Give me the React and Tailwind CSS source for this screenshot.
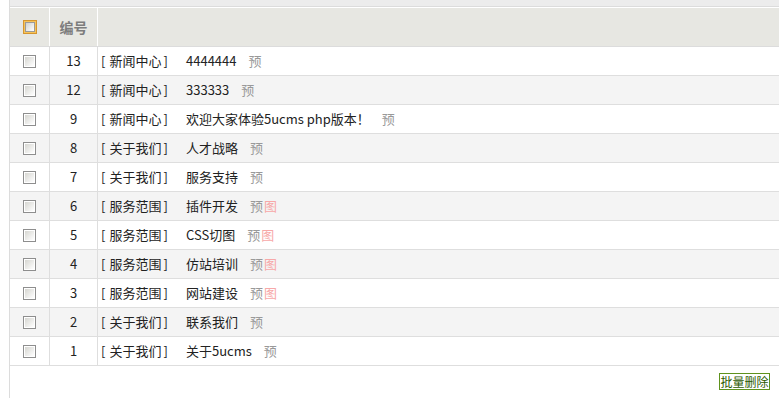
import React from "react";

const rows = [
  { id: 13, cat: "新闻中心", title: "4444444", pic: false },
  { id: 12, cat: "新闻中心", title: "333333", pic: false },
  { id: 9, cat: "新闻中心", title: "欢迎大家体验5ucms php版本！", pic: false },
  { id: 8, cat: "关于我们", title: "人才战略", pic: false },
  { id: 7, cat: "关于我们", title: "服务支持", pic: false },
  { id: 6, cat: "服务范围", title: "插件开发", pic: true },
  { id: 5, cat: "服务范围", title: "CSS切图", pic: true },
  { id: 4, cat: "服务范围", title: "仿站培训", pic: true },
  { id: 3, cat: "服务范围", title: "网站建设", pic: true },
  { id: 2, cat: "关于我们", title: "联系我们", pic: false },
  { id: 1, cat: "关于我们", title: "关于5ucms", pic: false },
];

const Checkbox = () => (
  <span className="block w-[13px] h-[13px] border border-[#8e8e8e] p-px bg-white">
    <span className="block w-full h-full bg-gradient-to-br from-[#d6d6d1] to-white" />
  </span>
);

const HeaderCheckbox = () => (
  <span className="block w-[14px] h-[14px] border border-[#d5962f] bg-[#f7c35a] p-px">
    <span className="block w-full h-full border border-[#9a9a9a] bg-gradient-to-br from-[#d2d2cd] to-white" />
  </span>
);

const App = () => {
  return (
    <div
      className="w-[779px] h-[398px] bg-white pl-[9px] text-[13px] text-[#333]"
      style={{ fontFamily: '"Noto Sans CJK SC", "Liberation Sans", sans-serif' }}
    >
      <div className="h-full border-l border-[#dcdcdc]">
        <div className="h-[7px] bg-[#ececec] border-b border-[#dcdcdc]" />
        <div className="h-px bg-white" />

        {/* header */}
        <div className="flex h-[39px] bg-[#e7e7e2] border-b border-[#dcdcdc]">
          <div className="w-[40px] shrink-0 flex items-center justify-center border-r border-white">
            <HeaderCheckbox />
          </div>
          <div className="w-[48px] shrink-0 flex items-center justify-center border-r border-white text-[14px] font-bold text-[#7d7d7d]">
            编号
          </div>
          <div className="flex-1" />
        </div>

        {rows.map((row, i) => (
          <div
            key={row.id}
            className={`flex h-[29px] border-b border-[#dedede] ${i % 2 === 1 ? "bg-[#f4f4f4]" : "bg-white"}`}
          >
            <div className="w-[40px] shrink-0 flex items-center justify-center border-r border-[#dedede]">
              <Checkbox />
            </div>
            <div className="w-[48px] shrink-0 flex items-center justify-center border-r border-[#dedede] text-[#222]">
              {row.id}
            </div>
            <div className="flex-1 flex items-center pl-[3px] whitespace-nowrap text-[#222]">
              <span className="w-[85px] shrink-0 flex">
                <span>[</span>
                <span className="ml-[4px]">{row.cat}</span>
                <span className="ml-[2px]">]</span>
              </span>
              <span>{row.title}</span>
              <span className="ml-[12px] text-[#999]">预</span>
              {row.pic && <span className="ml-px text-[#f7a8a8]">图</span>}
            </div>
          </div>
        ))}

        <div className="flex justify-end pt-[7px] pr-[9px]">
          <button className="h-[17px] w-[51px] border border-[#5f921d] bg-white text-[12px] leading-[15px] text-[#2d5a00]">
            批量删除
          </button>
        </div>
      </div>
    </div>
  );
};

export default App;
